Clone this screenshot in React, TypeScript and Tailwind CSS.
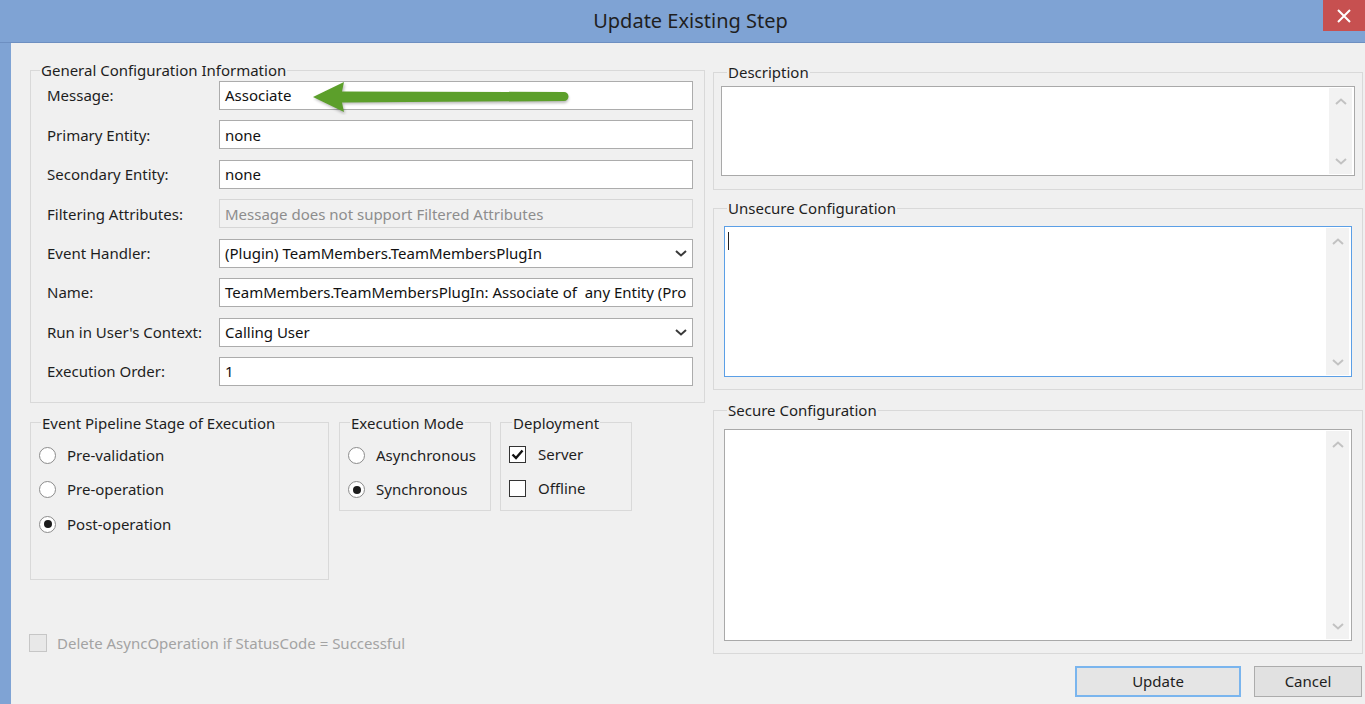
import React from "react"

const FONT = "font-['Noto_Sans',sans-serif]"

function Group({
  title,
  className,
  legendClass,
  children,
}: {
  title: string
  className?: string
  legendClass?: string
  children?: React.ReactNode
}) {
  return (
    <fieldset className={`min-w-0 border border-[#d9d9d9] ${className ?? ""}`}>
      <legend className={`px-[1px] leading-[20px] text-[#1e1e1e] ${legendClass ?? ""}`}>{title}</legend>
      {children}
    </fieldset>
  )
}

function Chevron({ up, className }: { up?: boolean; className?: string }) {
  return (
    <svg width="12" height="7" viewBox="0 0 12 7" className={className}>
      <polyline
        points={up ? "1,6 6,1.5 11,6" : "1,1 6,5.5 11,1"}
        fill="none"
        stroke="currentColor"
        strokeWidth="2"
      />
    </svg>
  )
}

function TextBox({ value, disabled }: { value: string; disabled?: boolean }) {
  return (
    <div
      className={`flex h-[29px] w-[474px] items-center overflow-hidden whitespace-nowrap border pl-[5px] ${
        disabled ? "border-[#d6d6d6] bg-[#f1f1f1] text-[#8d8d8d]" : "border-[#acacac] bg-white text-[#111]"
      }`}
    >
      {value}
    </div>
  )
}

function Combo({ value }: { value: string }) {
  return (
    <div className="flex h-[29px] w-[474px] items-center justify-between border border-[#acacac] bg-white pl-[5px] pr-[5px] text-[#111]">
      <span className="whitespace-nowrap">{value}</span>
      <Chevron className="text-[#3a3a3a]" />
    </div>
  )
}

function Radio({ label, checked }: { label: string; checked?: boolean }) {
  return (
    <div className="flex h-[34.5px] items-center gap-[11px]">
      <span className="flex h-[17px] w-[17px] items-center justify-center rounded-full border border-[#8c8c8c] bg-white">
        {checked && <span className="h-[8px] w-[8px] rounded-full bg-[#1c1c1c]" />}
      </span>
      <span className="text-[#1e1e1e]">{label}</span>
    </div>
  )
}

function Check({ label, checked }: { label: string; checked?: boolean }) {
  return (
    <div className="flex h-[34.5px] items-center gap-[12px]">
      <span className="flex h-[17px] w-[17px] items-center justify-center border border-[#333] bg-white">
        {checked && (
          <svg width="13" height="11" viewBox="0 0 13 11">
            <polyline points="1.5,5.5 5,9 11.5,1.5" fill="none" stroke="#111" strokeWidth="2.4" />
          </svg>
        )}
      </span>
      <span className="text-[#1e1e1e]">{label}</span>
    </div>
  )
}

function Memo({ focused, caret, className }: { focused?: boolean; caret?: boolean; className?: string }) {
  return (
    <div
      className={`flex border bg-white ${focused ? "border-[#5b9fe6]" : "border-[#a9a9a9]"} ${className ?? ""}`}
    >
      <div className="flex-1 pl-[3px] pt-[5px]">
        {caret && <div className="h-[18px] w-[1px] bg-[#222]" />}
      </div>
      <div className="my-[1px] mr-[2px] flex w-[23px] flex-col justify-between bg-[#f2f2f2] text-[#c2c2c2]">
        <div className="flex h-[26px] items-center justify-center">
          <Chevron up />
        </div>
        <div className="flex h-[26px] items-center justify-center">
          <Chevron />
        </div>
      </div>
    </div>
  )
}

function Arrow() {
  return (
    <svg className="pointer-events-none absolute left-[90px] top-[-4px]" width="265" height="38" viewBox="0 0 265 38">
      <defs>
        <filter id="blur" x="-10%" y="-50%" width="120%" height="200%">
          <feGaussianBlur stdDeviation="1.4" />
        </filter>
      </defs>
      <path
        d="M5 21.5 L36 7 L34 17 L255 17 A4.5 4.5 0 0 1 255 26 L34 27 L36 37 Z"
        fill="#000"
        opacity="0.28"
        filter="url(#blur)"
      />
      <path d="M4 20 L35 5 L33 14.5 L255 15 A4.5 4.5 0 0 1 255 24 L33 25.5 L35 35 Z" fill="#5c9f2b" />
    </svg>
  )
}

const rows: { label: string; value: string; kind?: "combo" | "disabled" }[] = [
  { label: "Message:", value: "Associate" },
  { label: "Primary Entity:", value: "none" },
  { label: "Secondary Entity:", value: "none" },
  { label: "Filtering Attributes:", value: "Message does not support Filtered Attributes", kind: "disabled" },
  { label: "Event Handler:", value: "(Plugin) TeamMembers.TeamMembersPlugIn", kind: "combo" },
  { label: "Name:", value: "TeamMembers.TeamMembersPlugIn: Associate of\u00a0 any Entity (Pro" },
  { label: "Run in User's Context:", value: "Calling User", kind: "combo" },
  { label: "Execution Order:", value: "1" },
]

export default function App() {
  return (
    <div className={`flex h-[704px] w-[1365px] flex-col overflow-hidden bg-[#7fa3d4] text-[15px] ${FONT}`}>
      {/* title bar */}
      <div className="grid h-[43px] shrink-0 grid-cols-[1fr_auto_1fr] border-b border-[#6d8fc1]">
        <div />
        <div className="pl-[16px] pt-[7px] text-[20px] leading-[27px] text-[#1f1f1f]">Update Existing Step</div>
        <div className="flex justify-end">
          <div className="flex h-[31px] w-[42px] items-center justify-center bg-[#c75050]">
            <svg width="14" height="14" viewBox="0 0 14 14">
              <path d="M1 1 L13 13 M13 1 L1 13" stroke="#fff" strokeWidth="2" />
            </svg>
          </div>
        </div>
      </div>

      <div className="flex flex-1">
        <div className="w-[11px] shrink-0" />
        <div className="flex flex-1 bg-[#f0f0f0] pl-[19px]">
          {/* left column */}
          <div className="w-[675px] shrink-0 pt-[17px]">
            <Group title="General Configuration Information" legendClass="ml-[9px]" className="pb-[16px] pr-[11px]">
              <div className="mt-[1px] flex flex-col gap-[10.43px]">
                {rows.map((r, i) => (
                  <div key={r.label} className="flex items-center">
                    <div className="w-[188px] shrink-0 pl-[16px] text-[#1e1e1e]">{r.label}</div>
                    <div className="relative">
                      {r.kind === "combo" ? (
                        <Combo value={r.value} />
                      ) : (
                        <TextBox value={r.value} disabled={r.kind === "disabled"} />
                      )}
                      {i === 0 && <Arrow />}
                    </div>
                  </div>
                ))}
              </div>
            </Group>

            <div className="mt-[10px] flex items-start">
              <Group
                title="Event Pipeline Stage of Execution"
                legendClass="ml-[2px]"
                className="h-[167px] w-[299px] pl-[8px]"
              >
                <div className="mt-[5px]">
                  <Radio label="Pre-validation" />
                  <Radio label="Pre-operation" />
                  <Radio label="Post-operation" checked />
                </div>
              </Group>
              <Group title="Execution Mode" legendClass="ml-[2px]" className="ml-[10px] h-[98px] w-[152px] pl-[8px]">
                <div className="mt-[5px]">
                  <Radio label="Asynchronous" />
                  <Radio label="Synchronous" checked />
                </div>
              </Group>
              <Group title="Deployment" legendClass="ml-[3px]" className="ml-[9px] h-[98px] w-[132px] pl-[8px]">
                <div className="mt-[4px]">
                  <Check label="Server" checked />
                  <Check label="Offline" />
                </div>
              </Group>
            </div>

            <div className="-ml-px mt-[52px] flex items-center gap-[10px]">
              <span className="h-[18px] w-[18px] border border-[#c6c6c6] bg-[#e8e8e8]" />
              <span className="text-[#a3a3a3]">Delete AsyncOperation if StatusCode = Successful</span>
            </div>
          </div>

          {/* right column */}
          <div className="ml-[8px] w-[650px] shrink-0 pt-[19px]">
            <Group title="Description" legendClass="ml-[6px]" className="px-[7px] pb-[13px]">
              <Memo className="mt-[4px] h-[90px]" />
            </Group>
            <Group title="Unsecure Configuration" legendClass="ml-[3px]" className="mt-[8px] px-[10px] pb-[12px]">
              <Memo className="mt-[8px] h-[151px]" focused caret />
            </Group>
            <Group title="Secure Configuration" legendClass="ml-[3px]" className="mt-[10px] px-[10px] pb-[12px]">
              <Memo className="mt-[9px] h-[212px]" />
            </Group>
            <div className="mt-[12px] flex justify-end gap-[13px] pr-[1px]">
              <button className="flex h-[31px] w-[166px] items-center justify-center border-2 border-[#7ab5ee] bg-[#e5e5e5] text-[#1e1e1e]">
                Update
              </button>
              <button className="flex h-[31px] w-[108px] items-center justify-center border border-[#acacac] bg-[#e1e1e1] text-[#1e1e1e]">
                Cancel
              </button>
            </div>
          </div>
        </div>
      </div>
    </div>
  )
}
